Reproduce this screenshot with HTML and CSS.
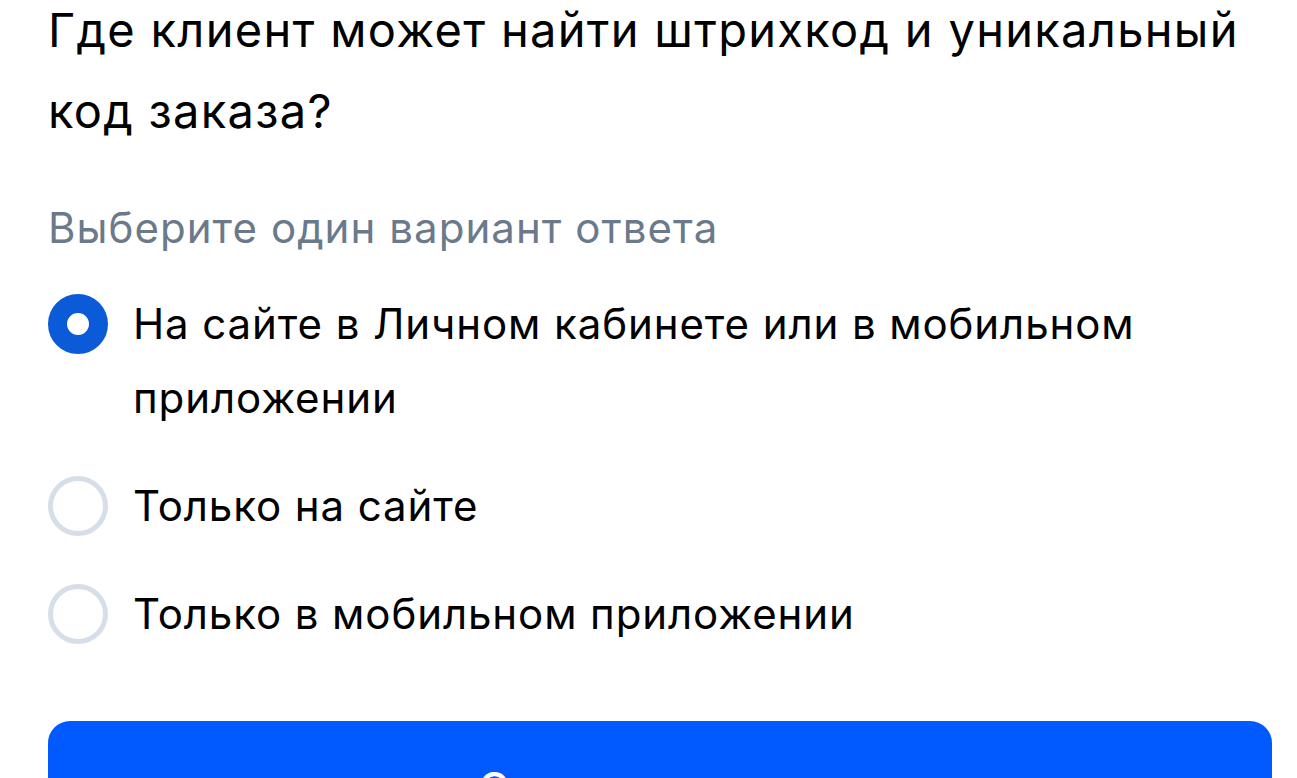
FILE: index.html
```html
<!DOCTYPE html>
<html lang="ru">
<head>
<meta charset="utf-8">
<link rel="stylesheet" href="styles.css">
</head>
<body>
<div class="page">
  <h1 class="title">Где клиент может найти штрихкод и уникальный код заказа?</h1>
  <p class="hint">Выберите один вариант ответа</p>
  <div class="options">
    <label class="option">
      <span class="radio radio-checked"></span>
      <span class="option-text">На сайте в Личном кабинете или в мобильном приложении</span>
    </label>
    <label class="option">
      <span class="radio"></span>
      <span class="option-text">Только на сайте</span>
    </label>
    <label class="option">
      <span class="radio"></span>
      <span class="option-text">Только в мобильном приложении</span>
    </label>
  </div>
  <button class="submit">Сохранить ответ</button>
</div>
</body>
</html>
```

FILE: styles.css
```css
html, body {
  margin: 0;
  padding: 0;
  background: #ffffff;
  overflow: hidden;
}
body {
  font-family: Inter, "Noto Sans", sans-serif;
  color: #000000;
}
.page {
  padding: 0 25px 0 48px;
}
.title {
  margin: -11px 0 0 0;
  font-size: 47px;
  font-weight: 400;
  line-height: 81px;
  letter-spacing: 1.3px;
}
.hint {
  margin: 52px 0 0 0;
  font-size: 42px;
  line-height: 50px;
  letter-spacing: 1.05px;
  color: #6b7a8b;
}
.options {
  display: flex;
  flex-direction: column;
  gap: 34px;
  margin-top: 34px;
}
.option {
  display: flex;
  align-items: flex-start;
  gap: 25px;
}
.radio {
  flex: 0 0 auto;
  box-sizing: border-box;
  width: 60px;
  height: 60px;
  margin-top: 7px;
  border-radius: 50%;
  border: 5px solid #d6dee7;
  background: #ffffff;
}
.radio-checked {
  border: 19px solid #0b5bd9;
}
.option-text {
  font-size: 42px;
  line-height: 74px;
  letter-spacing: 0.9px;
}
.submit {
  display: block;
  width: 100%;
  height: 134px;
  margin-top: 70px;
  border: none;
  border-radius: 22px;
  background: #005aff;
  color: #ffffff;
  font-family: Inter, "Noto Sans", sans-serif;
  font-size: 42px;
  line-height: 50px;
  font-weight: 500;
  letter-spacing: 0.9px;
}
```
